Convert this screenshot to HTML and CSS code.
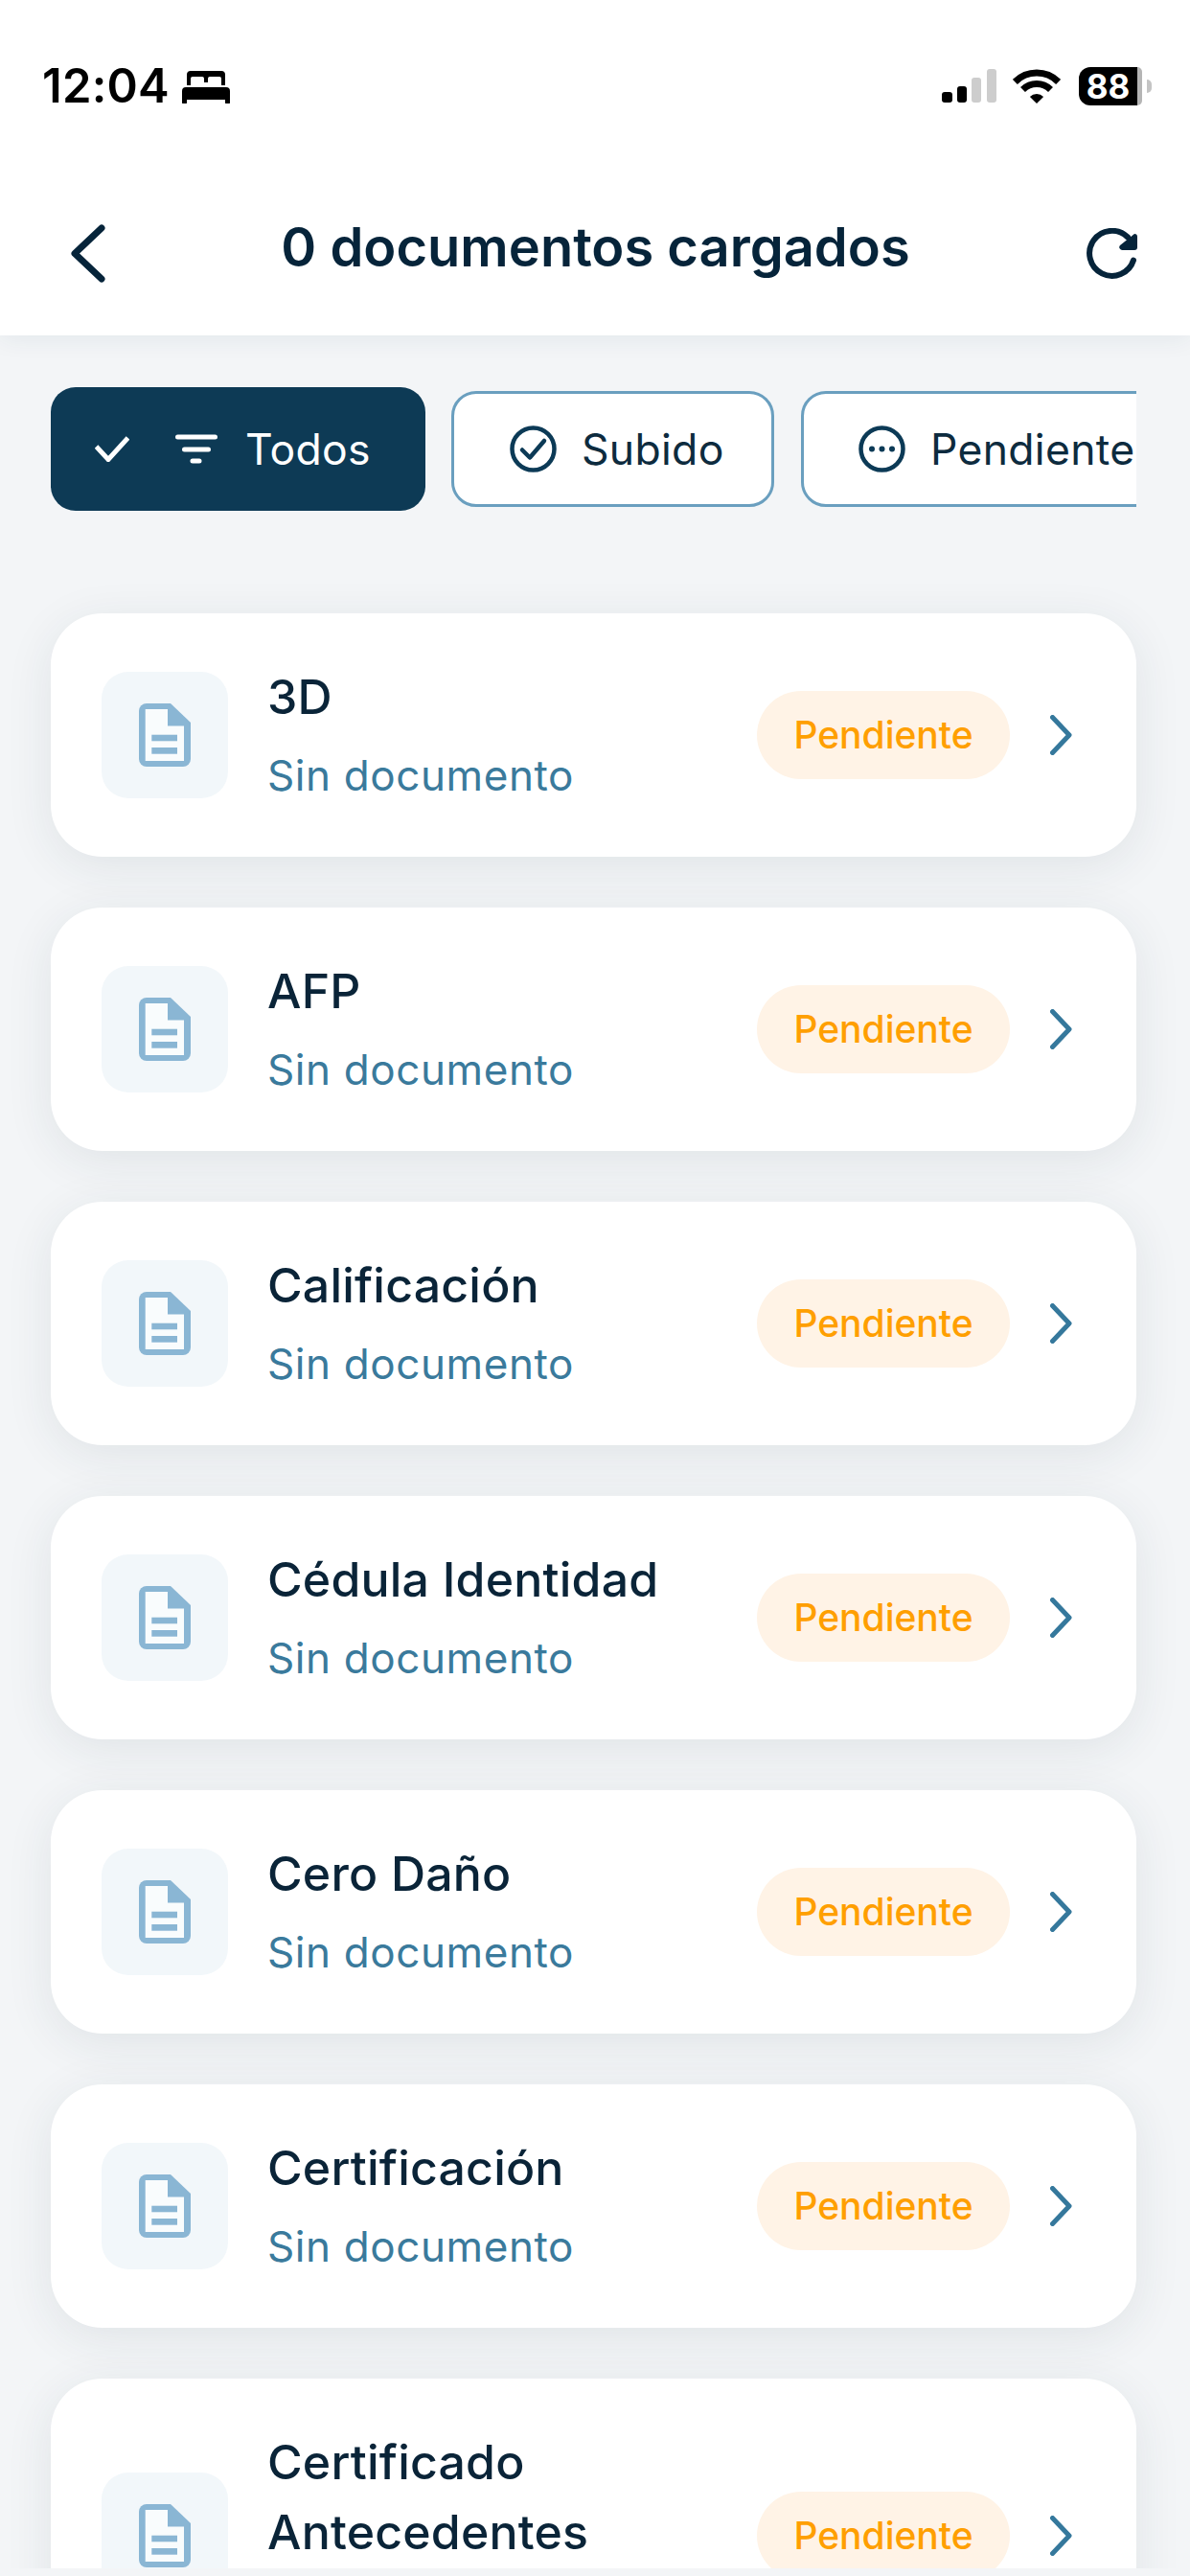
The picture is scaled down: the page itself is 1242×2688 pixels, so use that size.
FILE: index.html
```html
<!DOCTYPE html>
<html lang="es">
<head>
<meta charset="utf-8">
<title>Documentos</title>
<link rel="stylesheet" href="styles.css">
</head>
<body>
<svg class="sprites" width="0" height="0" aria-hidden="true">
  <symbol id="doc" viewBox="0 0 54 66">
    <path class="doc-shape" d="M8 0H33L54 20V58a8 8 0 0 1-8 8H8a8 8 0 0 1-8-8V8a8 8 0 0 1 8-8Z"/>
    <path class="doc-inner" d="M6.7 6H30V23.5H47V60H6.7Z"/>
    <rect class="doc-shape" x="13.3" y="32.7" width="26.7" height="6.6"/>
    <rect class="doc-shape" x="13.3" y="46" width="26.7" height="6.7"/>
  </symbol>
  <symbol id="chev" viewBox="0 0 23 42">
    <path d="M2.5 2.5 20 21 2.5 39.500" fill="none" stroke="#35789c" stroke-width="5" stroke-linecap="round" stroke-linejoin="round"/>
  </symbol>
</svg>
<div class="screen">
  <header class="top">
    <div class="status">
      <div class="status-left">
        <span class="time">12:04</span>
        <svg class="bed" viewBox="0 0 50 35"><path d="M5 16V5a4 4 0 0 1 4-4h32a4 4 0 0 1 4 4v11h-4V9a2 2 0 0 0-2-2H29a2 2 0 0 0-2 2v4h-4V9a2 2 0 0 0-2-2H11a2 2 0 0 0-2 2v7Z"/><path d="M4 18h42a4 4 0 0 1 4 4v12a1.500 1.500 0 0 1-1.500 1.500h-2A1.500 1.500 0 0 1 45 34v-3H5v3a1.500 1.500 0 0 1-1.500 1.500h-2A1.500 1.500 0 0 1 0 34V22a4 4 0 0 1 4-4Z"/></svg>
      </div>
      <div class="status-right">
        <svg class="signal" viewBox="0 0 57 36">
          <rect x="0" y="24" width="11" height="11" rx="3"/>
          <rect x="16" y="18" width="10" height="17" rx="3"/>
          <rect class="off" x="31" y="9" width="10" height="26" rx="3"/>
          <rect class="off" x="47" y="0" width="10" height="35" rx="3"/>
        </svg>
        <svg class="wifi" viewBox="0 0 50 36">
          <path class="arc" d="M2.400 13.400A32 32 0 0 1 47.600 13.400"/>
          <path class="arc" d="M10.500 21.500A20.500 20.500 0 0 1 39.500 21.500"/>
          <path d="M25 36 17.900 28.900A10 10 0 0 1 32.100 28.900Z"/>
        </svg>
        <div class="battery"><span class="battery-body">88</span><span class="battery-rest"></span><span class="battery-nub"></span></div>
      </div>
    </div>
    <div class="navbar">
      <svg class="back" viewBox="0 0 36 61"><path d="M32 4 4 30.500 32 57" fill="none" stroke="#06243a" stroke-width="7" stroke-linecap="round" stroke-linejoin="round"/></svg>
      <h1 class="title">0 documentos cargados</h1>
      <svg class="refresh" viewBox="0 0 54 53"><path d="M44 9.500A23.500 23.500 0 1 0 50 33.500" fill="none" stroke="#06243a" stroke-width="6" stroke-linecap="round"/><path d="M51 6a3 3 0 0 1 3 3v11a3 3 0 0 1-3 3H38a3 3 0 0 1-2-5Z" fill="#06243a"/></svg>
    </div>
  </header>

  <nav class="filters">
    <div class="chip chip-on">
      <svg class="tick" viewBox="0 0 36 27"><path d="M1.500 11 14 24.500 34.500 2" fill="none" stroke="#fff" stroke-width="5"/></svg>
      <svg class="funnel" viewBox="0 0 44 31"><path d="M2.500 3h39M9.500 16h25M18 28h7" fill="none" stroke="#fff" stroke-width="5" stroke-linecap="round"/></svg>
      <span>Todos</span>
    </div>
    <div class="chip chip-subido">
      <svg class="chip-icon" viewBox="0 0 49 49"><circle cx="24.500" cy="24.500" r="22" fill="none" stroke="#0c3a56" stroke-width="4.500"/><path d="M13 25.500 21 33.500 36 16" fill="none" stroke="#0c3a56" stroke-width="4.500" stroke-linecap="round" stroke-linejoin="round"/></svg>
      <span>Subido</span>
    </div>
    <div class="chip chip-pend">
      <svg class="chip-icon" viewBox="0 0 49 49"><circle cx="24.500" cy="24.500" r="22" fill="none" stroke="#0c3a56" stroke-width="4.500"/><circle cx="14" cy="24.500" r="3" fill="#0c3a56"/><circle cx="24.500" cy="24.500" r="3" fill="#0c3a56"/><circle cx="35" cy="24.500" r="3" fill="#0c3a56"/></svg>
      <span>Pendiente</span>
    </div>
  </nav>

  <main class="list">
    <article class="card">
      <div class="thumb"><svg class="doc"><use href="#doc"/></svg></div>
      <div class="info"><div class="name">3D</div><div class="sub">Sin documento</div></div>
      <span class="pill">Pendiente</span>
      <svg class="chevron"><use href="#chev"/></svg>
    </article>
    <article class="card">
      <div class="thumb"><svg class="doc"><use href="#doc"/></svg></div>
      <div class="info"><div class="name">AFP</div><div class="sub">Sin documento</div></div>
      <span class="pill">Pendiente</span>
      <svg class="chevron"><use href="#chev"/></svg>
    </article>
    <article class="card">
      <div class="thumb"><svg class="doc"><use href="#doc"/></svg></div>
      <div class="info"><div class="name">Calificación</div><div class="sub">Sin documento</div></div>
      <span class="pill">Pendiente</span>
      <svg class="chevron"><use href="#chev"/></svg>
    </article>
    <article class="card">
      <div class="thumb"><svg class="doc"><use href="#doc"/></svg></div>
      <div class="info"><div class="name">Cédula Identidad</div><div class="sub">Sin documento</div></div>
      <span class="pill">Pendiente</span>
      <svg class="chevron"><use href="#chev"/></svg>
    </article>
    <article class="card">
      <div class="thumb"><svg class="doc"><use href="#doc"/></svg></div>
      <div class="info"><div class="name">Cero Daño</div><div class="sub">Sin documento</div></div>
      <span class="pill">Pendiente</span>
      <svg class="chevron"><use href="#chev"/></svg>
    </article>
    <article class="card">
      <div class="thumb"><svg class="doc"><use href="#doc"/></svg></div>
      <div class="info"><div class="name">Certificación</div><div class="sub">Sin documento</div></div>
      <span class="pill">Pendiente</span>
      <svg class="chevron"><use href="#chev"/></svg>
    </article>
    <article class="card">
      <div class="thumb"><svg class="doc"><use href="#doc"/></svg></div>
      <div class="info"><div class="name">Certificado Antecedentes</div><div class="sub">Sin documento</div></div>
      <span class="pill">Pendiente</span>
      <svg class="chevron"><use href="#chev"/></svg>
    </article>
  </main>
</div>
</body>
</html>
```

FILE: styles.css
```css
* { box-sizing: border-box; }

html, body {
  margin: 0;
  height: 2688px;
  overflow: hidden;
  background: #f3f5f7;
  font-family: Inter, "Liberation Sans", sans-serif;
}

.sprites { display: block; height: 0; }

.screen {
  height: 2680px;
  overflow: hidden;
  display: flex;
  flex-direction: column;
}

/* top */
.top {
  flex: none;
  height: 350px;
  background: #fff;
  box-shadow: 0 4px 24px rgba(20, 50, 80, .07);
  position: relative;
  z-index: 2;
}

.status {
  height: 178px;
  padding: 70px 40px 0 44px;
  display: flex;
  justify-content: space-between;
  align-items: flex-start;
}

.status-left { display: flex; align-items: center; gap: 13px; height: 40px; }
.time { font-size: 49px; line-height: 40px; font-weight: 600; letter-spacing: .2px; color: #000; }
.bed { width: 50px; height: 35px; fill: #000; }

.status-right { display: flex; align-items: center; height: 40px; }
.signal { width: 57px; height: 36px; fill: #000; margin-right: 17px; }
.signal .off { fill: #cdcdcd; }
.wifi { width: 50px; height: 36px; fill: #000; margin-right: 19px; }
.wifi .arc { fill: none; stroke: #000; stroke-width: 7; }

.battery { display: flex; align-items: center; height: 40px; }
.battery-body {
  width: 61px;
  height: 40px;
  background: #000;
  color: #fff;
  border-radius: 12px 0 0 12px;
  font-size: 35px;
  font-weight: 700;
  line-height: 40px;
  text-align: center;
}
.battery-rest { width: 5px; height: 40px; background: #b5b5b5; border-radius: 0 10px 10px 0; }
.battery-nub { width: 5px; height: 14px; margin-left: 5px; background: #c4c4c4; border-radius: 0 7px 7px 0; }

.navbar {
  height: 172px;
  padding: 0 55px 0 74px;
  display: flex;
  align-items: center;
  justify-content: space-between;
}
.back { width: 36px; height: 61px; }
.refresh { width: 54px; height: 53px; }
.title {
  margin: 0 0 12px;
  font-size: 56px;
  font-weight: 600;
  color: #06243a;
  line-height: 66px;
}

/* filters */
.filters {
  flex: none;
  margin: 54px 56px 0 53px;
  height: 129px;
  display: flex;
  align-items: center;
  overflow: hidden;
}

.chip {
  flex: none;
  height: 121px;
  display: flex;
  align-items: center;
  border: 3px solid #6a9fbf;
  border-radius: 26px;
  background: #fff;
  color: #0d2b3e;
  font-size: 44.500px;
  letter-spacing: .3px;
  line-height: 50px;
  white-space: nowrap;
}

.chip-on {
  width: 391px;
  height: 129px;
  padding-left: 46px;
  background: #0d3a55;
  border: 0;
  color: #fff;
}
.tick { width: 36px; height: 27px; margin-right: 48px; }
.funnel { width: 44px; height: 31px; margin-right: 29px; }

.chip-subido { width: 337px; margin-left: 27px; padding-left: 58px; }
.chip-pend { width: 400px; margin-left: 28px; padding-left: 57px; }
.chip-icon { width: 49px; height: 49px; margin-right: 26px; flex: none; }

/* list */
.list {
  flex: none;
  margin-top: 107px;
  padding: 0 56px 0 53px;
  display: flex;
  flex-direction: column;
  gap: 53px;
}

.card {
  flex: none;
  padding: 50px 67px 50px 53px;
  display: flex;
  align-items: center;
  background: #fff;
  border-radius: 54px;
  box-shadow: 0 10px 50px rgba(30, 50, 65, .09);
}

.thumb {
  flex: none;
  width: 132px;
  height: 132px;
  margin-right: 41px;
  background: #f2f7fa;
  border-radius: 28px;
  display: flex;
  align-items: center;
  justify-content: center;
}
.doc { width: 54px; height: 66px; }
.doc-shape { fill: #8ab6d4; }
.doc-inner { fill: #f9fcfd; }

.info { flex: 1; min-width: 0; }
.name { padding-top: 1px; font-size: 50px; line-height: 73px; font-weight: 500; letter-spacing: .2px; color: #0a2438; }
.sub { margin-top: 10px; font-size: 44px; line-height: 70px; letter-spacing: .6px; color: #3a7a9c; }

.pill {
  flex: none;
  width: 264px;
  height: 92px;
  margin: 0 42px 0 40px;
  border-radius: 46px;
  background: #fff3e6;
  color: #ff9f00;
  font-size: 39px;
  font-weight: 500;
  line-height: 92px;
  text-align: center;
}

.chevron { flex: none; width: 23px; height: 42px; }
```
